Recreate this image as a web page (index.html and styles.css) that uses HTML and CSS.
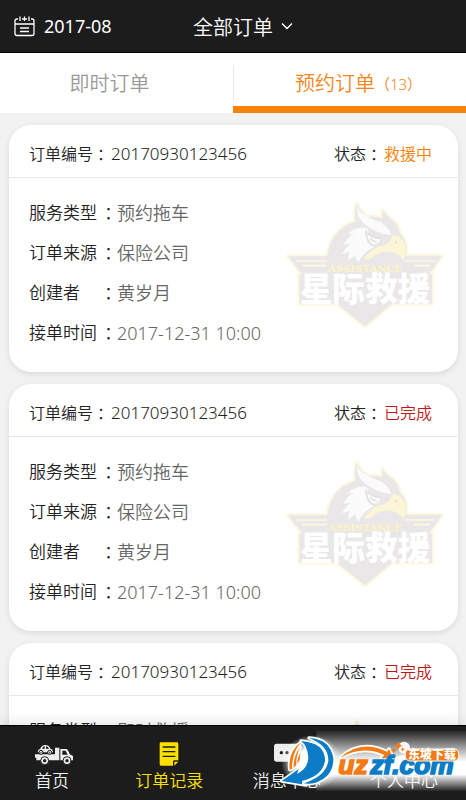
FILE: index.html
```html
<!DOCTYPE html>
<html lang="zh-CN">
<head>
  <meta charset="UTF-8">
  <meta name="viewport" content="width=device-width, initial-scale=1.0">
  <title>全部订单</title>
  <link rel="stylesheet" href="styles.css">
</head>
<body>
  <header class="topbar">
    <button class="date-btn" type="button">
      <svg width="21" height="21" viewBox="0 0 21 21" fill="none" stroke="#fff" stroke-width="1.3">
        <path d="M4 3H3Q1 3 1 5V17.500Q1 19.500 3 19.500H18Q20 19.500 20 17.500V5Q20 3 18 3H17M8 3H13M1 8H20M6 0.500V5M10.500 0.500V5M15 0.500V5M6 12H15M6 15.500H15"/>
      </svg>
      2017-08
    </button>
    <button class="title-btn" type="button">
      全部订单
      <svg width="12" height="8" viewBox="0 0 12 8" fill="none" stroke="#fff" stroke-width="1.400">
        <path d="M1 1.500L6 6.500L11 1.500"/>
      </svg>
    </button>
  </header>

  <nav class="tabs">
    <a href="#now">即时订单</a>
    <a href="#booked" class="active">预约订单<small>（13）</small></a>
  </nav>

  <main class="orders">
    <article class="card">
      <div class="card-head">
        <p>订单编号<i>：</i><span class="num">20170930123456</span></p>
        <p>状态<i>：</i><span class="doing">救援中</span></p>
      </div>
      <div class="card-body">
        <dl>
          <div><dt>服务类型<i>：</i></dt><dd>预约拖车</dd></div>
          <div><dt>订单来源<i>：</i></dt><dd>保险公司</dd></div>
          <div><dt>创建者<i>：</i></dt><dd>黄岁月</dd></div>
          <div><dt>接单时间<i>：</i></dt><dd>2017-12-31 10:00</dd></div>
        </dl>
        <svg class="logo" viewBox="0 0 510 420">
          <!-- logo, reused by the other cards -->
          <g id="eagle">
            <g fill="#e9e7e8" stroke="#fdf9e0" stroke-width="12" stroke-linejoin="round" paint-order="stroke">
              <path d="M24 184H142C148 130 180 92 226 80Q222 50 230 26Q242 50 262 66Q286 62 306 70L308 46Q318 62 336 74Q356 88 360 116Q384 138 378 182H486L448 238H456V326H336L255 394L170 326H58V238H66Z"/>
            </g>
            <path d="M48 198H140M66 212H140M376 198H466M400 212H450" stroke="#fdf9e0" stroke-width="5"/>
            <path d="M230 32Q244 62 282 74Q322 84 334 120Q302 118 276 102Q248 88 234 62Z" fill="#fbfbfb"/>
            <path d="M256 98Q222 96 204 118L222 116Q198 130 190 150L210 146Q194 160 186 178L210 170Q202 184 206 196L226 180Q226 194 236 202Q248 172 284 156Q262 150 260 132Q258 116 266 106Z" fill="#fbfbfb"/>
            <path d="M262 118Q286 136 302 132Q294 150 276 148Q262 142 262 118Z" fill="#fff"/>
            <path d="M258 106Q256 138 284 154M264 116Q284 132 304 130M272 128Q274 140 290 140" fill="none" stroke="#e2e0e1" stroke-width="5"/>
            <path d="M252 194Q272 158 314 150Q332 144 338 120Q362 122 374 146Q382 170 370 196Q356 172 330 170Q298 168 280 186Q268 196 252 194Z" fill="#fdf6d6"/>
            <path d="M346 136Q354 138 348 148Q342 144 346 136Z" fill="#e4e2e3"/>
            <text x="255" y="231" class="logo-en">ASSISTANCE</text>
            <text x="255" y="317" class="logo-cn">星际救援</text>
          </g>
        </svg>
      </div>
    </article>

    <article class="card">
      <div class="card-head">
        <p>订单编号<i>：</i><span class="num">20170930123456</span></p>
        <p>状态<i>：</i><span class="done">已完成</span></p>
      </div>
      <div class="card-body">
        <dl>
          <div><dt>服务类型<i>：</i></dt><dd>预约拖车</dd></div>
          <div><dt>订单来源<i>：</i></dt><dd>保险公司</dd></div>
          <div><dt>创建者<i>：</i></dt><dd>黄岁月</dd></div>
          <div><dt>接单时间<i>：</i></dt><dd>2017-12-31 10:00</dd></div>
        </dl>
        <svg class="logo" viewBox="0 0 510 420"><use href="#eagle"/></svg>
      </div>
    </article>

    <article class="card">
      <div class="card-head">
        <p>订单编号<i>：</i><span class="num">20170930123456</span></p>
        <p>状态<i>：</i><span class="done">已完成</span></p>
      </div>
      <div class="card-body">
        <dl>
          <div><dt>服务类型<i>：</i></dt><dd>即时救援</dd></div>
        </dl>
        <svg class="logo" viewBox="0 0 510 420"><use href="#eagle"/></svg>
      </div>
    </article>
  </main>

  <nav class="bottom-nav">
    <a href="#home">
      <svg class="truck" width="39" height="26" viewBox="0 0 117 78" fill="#eee">
        <path d="M4 40H60V20H73V58H4V50H0V40ZM76 24H94Q100 26 104 40L114 45V58H76Z"/>
        <path d="M8 32Q9 24 16 23Q20 12 31 12Q43 12 46 23Q54 24 54 34H8Z"/>
        <path d="M21 23Q24 16 29 16V23ZM33 16Q40 17 42 23H33ZM82 29H92L98 41H82Z" fill="#1c1c1c"/>
        <g stroke="#1c1c1c" stroke-width="3">
          <circle cx="18" cy="34" r="6"/><circle cx="44" cy="34" r="6"/>
          <circle cx="29" cy="59" r="12"/><circle cx="96" cy="59" r="12"/>
        </g>
        <g fill="#1c1c1c">
          <circle cx="18" cy="34" r="2"/><circle cx="44" cy="34" r="2"/>
          <circle cx="29" cy="59" r="5"/><circle cx="96" cy="59" r="5"/>
        </g>
      </svg>
      首页
    </a>
    <a href="#orders" class="active">
      <svg width="20" height="26" viewBox="0 0 60 78" fill="#fee000">
        <path d="M6 4H54Q58 4 58 8V58H46Q42 58 42 62V74H6Q2 74 2 70V8Q2 4 6 4ZM46 62H58L46 74Z"/>
        <path d="M11 18H49M11 32H49M11 46H49" stroke="#1c1c1c" stroke-width="4"/>
      </svg>
      订单记录
    </a>
    <a href="#messages">
      <svg width="26" height="26" viewBox="0 0 78 78" fill="#eee">
        <path d="M8 8H70Q78 8 78 16V54Q78 62 70 62H8Q0 62 0 54V16Q0 8 8 8Z"/>
        <g fill="#1c1c1c"><circle cx="22" cy="35" r="5"/><circle cx="39" cy="35" r="5"/><circle cx="56" cy="35" r="5"/></g>
      </svg>
      消息中心
    </a>
    <a href="#me">
      <svg width="26" height="26" viewBox="0 0 78 78" fill="#eee">
        <circle cx="39" cy="20" r="18"/><path d="M6 74Q8 42 39 42Q70 42 72 74Z"/>
      </svg>
      个人中心
    </a>

    <!-- download site mark -->
    <div class="site-mark">
      <svg viewBox="0 0 699 255">
        <defs>
          <linearGradient id="bar" x2="0" y2="1">
            <stop offset="0" stop-color="#fff" stop-opacity="0"/>
            <stop offset=".4" stop-color="#fff" stop-opacity=".8"/>
            <stop offset=".52" stop-color="#fff"/>
            <stop offset=".72" stop-color="#fff"/>
            <stop offset="1" stop-color="#fff" stop-opacity="0"/>
          </linearGradient>
          <radialGradient id="spot">
            <stop offset=".5" stop-color="#fff"/>
            <stop offset="1" stop-color="#fff" stop-opacity="0"/>
          </radialGradient>
        </defs>
        <rect x="250" y="44" width="449" height="186" fill="url(#bar)"/>
        <ellipse cx="236" cy="142" rx="92" ry="82" fill="url(#spot)"/>
        <g stroke="#fff" stroke-width="10" stroke-linejoin="round" paint-order="stroke">
          <path d="M206 80Q164 108 170 164L177 162Q176 112 206 80ZM202 96Q180 124 182 158L190 150Q188 124 202 96ZM202 114Q192 130 193 146L200 136Z" fill="#f47a14"/>
          <path d="M204 78Q224 92 226 128Q224 162 192 176L197 162L146 198L220 210L206 198Q268 184 276 138Q278 84 204 78Z" fill="#0b7cc5"/>
          <path d="M228 69Q292 72 301 130Q302 184 248 203Q230 208 212 205Q278 184 286 138Q288 92 228 69Z" fill="#0b7cc5"/>
          <path d="M322 128Q382 72 462 110L468 102L480 130L446 130L454 120Q388 90 322 128Z" fill="#f47a14"/>
        </g>
        <g class="mark-name">
          <text x="316" y="178" fill="#f47a14" stroke="#f47a14">uz</text>
          <text x="412" y="178" fill="#0b7cc5" stroke="#0b7cc5">zf.com</text>
        </g>
        <path d="M496 80l4 8 8 4-8 4-4 8-4-8-8-4 8-4ZM482 97l3 6 6 3-6 3-3 6-3-6-6-3 6-3ZM509 96l2 5 5 2-5 2-2 5-2-5-5-2 5-2Z" fill="#f47a14"/>
        <rect x="517" y="102" width="160" height="36" rx="14" fill="#f47a14" stroke="#fff" stroke-width="3"/>
        <text x="597" y="133" class="mark-tag">东坡下载</text>
      </svg>
    </div>
  </nav>
</body>
</html>
```

FILE: styles.css
```css
* {
  box-sizing: border-box;
}
body {
  margin: 0;
  height: 100vh;
  display: flex;
  flex-direction: column;
  background: #f2f2f2;
  color: #222;
  font-family: "Noto Sans", "Noto Sans CJK SC", sans-serif;
  font-weight: 350;
  line-height: 24px;
}
a {
  text-decoration: none;
}
button {
  display: flex;
  align-items: center;
  padding: 0;
  border: 0;
  background: none;
  color: #fff;
  font-family: inherit;
  cursor: pointer;
}
p, dl, dd {
  margin: 0;
}
/* centred full-width colon */
i {
  font-style: normal;
  font-family: "Noto Sans CJK TC", sans-serif;
}

/* top bar */
.topbar {
  flex: none;
  display: grid;
  grid-template-columns: 1fr auto 1fr;
  align-items: center;
  height: 53px;
  padding: 0 14px;
  background: #1c1c1c;
  border-bottom: 1px solid #000;
}
.date-btn {
  gap: 9px;
  font-size: 18px;
  font-weight: 400;
}
.title-btn {
  gap: 8px;
  padding-left: 20px;
  font-size: 20px;
  font-weight: 350;
}

/* tabs */
.tabs {
  flex: none;
  display: flex;
  height: 60px;
  background: #fff;
}
.tabs a {
  width: 50%;
  display: flex;
  align-items: center;
  justify-content: center;
  padding: 2px 14px 0 0;
  color: #999;
  font-size: 20px;
}
.tabs a.active {
  padding: 9px 0 0 18px;
  border-bottom: 7px solid #f5820b;
  background: linear-gradient(#e8e8e8, #e8e8e8) 0 12px / 1px 36px no-repeat;
  color: #f08519;
}
.tabs small {
  font-size: 15px;
}

/* order cards */
.orders {
  flex: 1;
  min-height: 0;
  overflow: hidden;
  padding: 12px 8px 0 9px;
}
.card {
  margin-bottom: 12px;
  border-radius: 22px;
  background: #fff;
  box-shadow: 0 2px 6px rgba(0, 0, 0, 0.1);
}
.card-head {
  display: flex;
  justify-content: space-between;
  align-items: center;
  height: 53px;
  padding: 6px 26px 0 20px;
  border-bottom: 1px solid #e8e8e8;
  font-size: 16px;
}
.card-head p {
  display: flex;
  align-items: center;
}
.card-head span {
  margin-left: 2px;
}
.num {
  font-size: 17px;
}
.doing {
  color: #f5820b;
}
.done {
  color: #c01818;
}
.card-body {
  display: flex;
  justify-content: space-between;
  height: 194px;
  padding: 15px 8px 0 20px;
  font-size: 18px;
}
.card-body dl div {
  display: flex;
  align-items: center;
  height: 40px;
  white-space: nowrap;
}
.card-body dt {
  display: flex;
  justify-content: space-between;
  width: 88px;
  font-size: 17px;
}
.card-body dd {
  color: #666;
}
.logo {
  flex: none;
  width: 170px;
  height: 140px;
  margin-top: 2px;
}
.logo-en {
  font: bold 30px "DejaVu Serif", serif;
  fill: #fdf3c4;
  text-anchor: middle;
}
.logo-cn {
  font: 900 98px "Noto Sans CJK SC", sans-serif;
  fill: #fff;
  text-anchor: middle;
}

/* bottom nav */
.bottom-nav {
  flex: none;
  position: relative;
  display: flex;
  justify-content: space-between;
  height: 75px;
  padding: 15px 28px 0 18px;
  background: #1c1c1c;
  border-top: 1px solid #000;
  box-shadow: 0 -2px 12px rgba(0, 0, 0, 0.12);
}
.bottom-nav a {
  display: flex;
  flex-direction: column;
  align-items: center;
  width: 68px;
  color: #eee;
  font-size: 17px;
  line-height: 28px;
  white-space: nowrap;
}
.bottom-nav a.active {
  color: #fee000;
}
.truck {
  margin-left: 4px;
}
.site-mark {
  position: absolute;
  right: 0;
  bottom: 0;
  width: 233px;
  height: 85px;
  pointer-events: none;
}
.mark-name {
  font: italic bold 79px "Liberation Sans", sans-serif;
  stroke-width: 5px;
}
.mark-tag {
  font: 900 36px "Noto Sans CJK SC", sans-serif;
  fill: #fff;
  text-anchor: middle;
}
```
